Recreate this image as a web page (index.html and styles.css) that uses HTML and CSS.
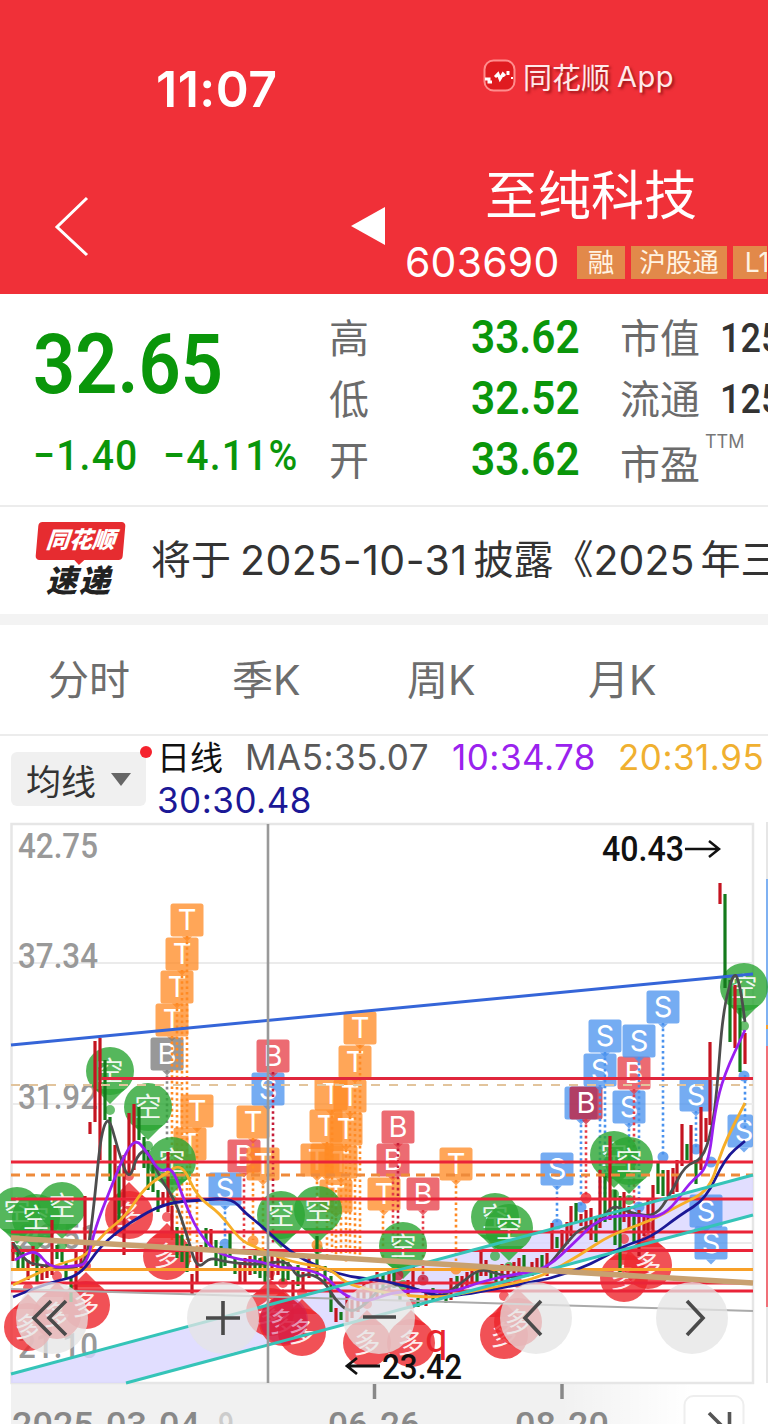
FILE: index.html
```html
<!DOCTYPE html>
<html lang="zh-CN">
<head>
    <meta charset="UTF-8">
    <title>至纯科技 603690</title>
    <link rel="stylesheet" href="styles.css">
</head>
<body>
    <header class="top-bar">
        <div class="status-row">
            <span class="clock">11:07</span>
            <span class="app-mark">
                <svg width="34" height="34" viewBox="0 0 34 34">
                    <rect x="1.5" y="1.5" width="30" height="30" rx="9" fill="#e01b20" stroke="#ff8d8d" stroke-width="2"/>
                    <path d="M2 20h4v3h3M12 18l3-3 2 5 3-5 2 2M25 12v4" fill="none" stroke="#fff" stroke-width="3"/>
                    <path d="M29 18v2" fill="none" stroke="#fff" stroke-width="2"/>
                </svg>
                <span class="app-cn">同花顺</span><span class="app-en">App</span>
            </span>
        </div>
        <div class="title-row">
            <svg class="back" width="36" height="62" viewBox="0 0 36 62"><path d="M33 2 3 31l30 28" fill="none" stroke="#fff" stroke-width="3"/></svg>
            <svg class="prev" width="35" height="40" viewBox="0 0 35 40"><path d="M0 20 34 1v38z" fill="#fff"/></svg>
            <div class="stock">
                <h1>至纯科技</h1>
                <div class="stock-code">
                    <span class="code">603690</span>
                    <span class="tag">融</span>
                    <span class="tag tag-wide">沪股通</span>
                    <span class="tag">L1</span>
                </div>
            </div>
        </div>
    </header>

    <section class="quote">
        <div class="quote-main">
            <div class="price">32.65</div>
            <div class="change"><span>−1.40</span><span>−4.11%</span></div>
        </div>
        <dl class="quote-grid">
            <dt>高</dt><dd>33.62</dd>
            <dt>低</dt><dd>32.52</dd>
            <dt>开</dt><dd>33.62</dd>
        </dl>
        <dl class="quote-more">
            <dt>市值</dt><dd>125</dd>
            <dt>流通</dt><dd>125</dd>
            <dt class="pe">市盈</dt><dd class="ttm">TTM</dd>
        </dl>
    </section>

    <section class="news">
        <div class="news-logo">
            <span class="news-brand">同花顺</span>
            <span class="news-name">速递</span>
        </div>
        <p>将于<span class="num date">2025-10-31</span>披露《<span class="num">2025</span><span class="year">年三</span></p>
    </section>

    <nav class="tabs">
        <span>分时</span><span>季K</span><span>周K</span><span>月K</span><span>日</span>
    </nav>

    <section class="legend">
        <div class="ma-select">均线<i class="caret"></i><i class="dot"></i></div>
        <div class="ma-values">
            <span class="ma-name">日线</span><span class="ma5">MA5:35.07</span><span class="ma10">10:34.78</span><span class="ma20">20:31.95</span>
            <span class="ma30">30:30.48</span>
        </div>
    </section>

    <section class="chart">
        <svg id="kline" width="768" height="604" viewBox="0 820 768 604"></svg>
        <div class="chart-nav">
            <button><svg viewBox="0 0 72 72"><path d="M35 19 18 36l17 17M50 19 33 36l17 17"/></svg></button>
            <button><svg viewBox="0 0 72 72"><path d="M36 19v34M19 36h34"/></svg></button>
            <button><svg viewBox="0 0 72 72"><path d="M20 35h33"/></svg></button>
            <button><svg viewBox="0 0 72 72"><path d="M41 19 25 36l16 17"/></svg></button>
            <button><svg viewBox="0 0 72 72"><path d="M31 19l16 17-16 17"/></svg></button>
        </div>
    </section>
    <script src="chart.js"></script>
</body>
</html>
```

FILE: styles.css
```css
* {
    box-sizing: border-box;
}
body {
    margin: 0;
    width: 768px;
    height: 1424px;
    overflow: hidden;
    background: #fff;
    font-family: Inter, "Noto Sans CJK SC", sans-serif;
    color: #333;
}
h1, p, dl, dd {
    margin: 0;
}

/* header */
.top-bar {
    height: 294px;
    background: #f03038;
    color: #fff;
    overflow: hidden;
}
.status-row {
    display: flex;
    height: 160px;
    padding: 57px 0 0 156px;
    align-items: flex-start;
}
.clock {
    width: 327px;
    margin-top: 7px;
    font-size: 50px;
    line-height: 50px;
    font-weight: 600;
    letter-spacing: 0.5px;
}
.app-mark {
    display: flex;
    align-items: center;
    height: 38px;
    text-shadow: 2px 2px 3px rgba(90, 0, 0, 0.6);
    color: #ffe9e9;
}
.app-cn {
    margin-left: 6px;
    font-size: 29px;
}
.app-en {
    margin-left: 7px;
    font-size: 29px;
    letter-spacing: 0.5px;
}
.title-row {
    display: flex;
    align-items: flex-start;
    padding-left: 54px;
    overflow: hidden;
}
.back, .prev, .stock {
    flex: none;
}
.back {
    margin-top: 36px;
}
.prev {
    margin: 46px 0 0 261px;
}
.stock {
    width: 362px;
    margin-left: 19px;
    white-space: nowrap;
}
.stock h1 {
    padding: 2px 0 0 80px;
    font-size: 53px;
    line-height: 68px;
    font-weight: 400;
}
.stock-code {
    display: flex;
    align-items: center;
    height: 64px;
    overflow: hidden;
}
.code {
    flex: none;
    width: 172px;
    font-size: 41px;
    letter-spacing: 0.2px;
}
.tag {
    flex: none;
    width: 48px;
    height: 33px;
    margin-right: 6px;
    background: #e2894a;
    color: #fff3e2;
    font-size: 26.5px;
    line-height: 32px;
    text-align: center;
}
.tag-wide {
    width: 96px;
}

/* quote */
.quote {
    display: flex;
    height: 213px;
    border-bottom: 2px solid #ececec;
    overflow: hidden;
}
.quote-main {
    flex: none;
    width: 329px;
    padding-left: 33px;
    color: #0a960a;
    font-family: Roboto, sans-serif;
}
.price {
    margin-top: 29px;
    font-size: 84px;
    line-height: 84px;
    font-weight: 600;
    transform: scaleX(0.88);
    transform-origin: left;
}
.change {
    display: flex;
    gap: 27px;
    margin-top: 24px;
    font-size: 43px;
    line-height: 48px;
    font-weight: 500;
    letter-spacing: 1.3px;
    white-space: nowrap;
    transform: scaleX(0.91);
    transform-origin: left;
}
.quote-grid, .quote-more {
    display: grid;
    flex: none;
    grid-auto-rows: 61px;
    align-content: start;
    padding-top: 13px;
    font-size: 40px;
    line-height: 63px;
    color: #6b6b6b;
}
.quote-grid {
    width: 291px;
    grid-template-columns: 142px 149px;
}
.quote-grid dd, .quote-more dd {
    font-family: Roboto, sans-serif;
    font-size: 47px;
    line-height: 60px;
    font-weight: 600;
    color: #0a960a;
    transform: scaleX(0.9);
    transform-origin: left;
}
.quote-more {
    width: 148px;
    grid-template-columns: 100px 48px;
    overflow: hidden;
}
.quote-more dd {
    font-size: 40px;
    line-height: 64px;
    font-weight: 500;
    color: #333;
}
.quote-more .pe {
    padding-top: 4px;
}
.quote-more .ttm {
    margin: -7px 0 0 -15px;
    font-family: Inter, sans-serif;
    font-size: 18px;
    line-height: 40px;
    font-weight: 400;
    color: #777;
    transform: none;
}

/* news */
.news {
    display: flex;
    height: 118px;
    padding: 15px 0 0 37px;
    border-bottom: 11px solid #f3f3f3;
    overflow: hidden;
}
.news-logo {
    flex: none;
    width: 114px;
    line-height: 1;
    font-style: italic;
    font-weight: 900;
}
.news-brand {
    display: block;
    width: 87px;
    height: 38px;
    border-radius: 4px;
    background: #e62c30;
    color: #fff;
    font-size: 23px;
    line-height: 37px;
    text-align: center;
    transform: skewX(-5deg);
}
.news-brand::after {
    content: "";
    display: block;
    width: 0;
    margin: 0 auto;
    border: 6px solid transparent;
    border-top-color: #e62c30;
}
.news-name {
    display: block;
    margin: 4px 0 0 9px;
    font-size: 31px;
    letter-spacing: 2px;
    line-height: 34px;
    color: #222;
}
.news p {
    display: flex;
    font-size: 40px;
    line-height: 76px;
    white-space: nowrap;
}
.num {
    font-size: 41px;
}
.date {
    margin: 0 6px 0 9px;
    letter-spacing: 0.5px;
}
.year {
    margin-left: 6px;
}

/* tabs */
.tabs {
    display: flex;
    height: 111px;
    padding-left: 48px;
    border-bottom: 2px solid #ececec;
    font-size: 41px;
    line-height: 111px;
    color: #6d6d6d;
    white-space: nowrap;
    overflow: hidden;
}
.tabs span {
    flex: none;
    width: 175px;
}
.tabs span:first-child {
    width: 184px;
}
.tabs span:nth-child(3) {
    width: 181px;
}

/* moving averages */
.legend {
    display: flex;
    height: 84px;
    padding-left: 11px;
    overflow: hidden;
}
.ma-select {
    position: relative;
    display: flex;
    flex: none;
    align-items: center;
    width: 135px;
    height: 54px;
    margin-top: 16px;
    padding-left: 15px;
    border-radius: 6px;
    background: #f0f0f0;
    font-size: 35px;
}
.caret {
    margin: 1px 0 0 15px;
    border: 10px solid transparent;
    border-top: 13px solid #666;
    border-bottom: 0;
}
.dot {
    position: absolute;
    top: -6px;
    right: -6px;
    width: 12px;
    height: 12px;
    border-radius: 50%;
    background: #f5222d;
}
.ma-values {
    margin-left: 11px;
    font-size: 35px;
    line-height: 42px;
    letter-spacing: 0.5px;
    white-space: nowrap;
}
.ma-name {
    margin-right: 22px;
    font-size: 33px;
    letter-spacing: 0;
    color: #111;
}
.ma5 {
    margin-right: 23px;
    color: #595959;
}
.ma10 {
    margin-right: 22px;
    color: #9a22ee;
}
.ma20 {
    color: #f0b030;
}
.ma30 {
    display: block;
    color: #1b1896;
}

/* chart */
.chart {
    position: relative;
    height: 604px;
}
#kline {
    display: block;
}
.chart-nav {
    position: absolute;
    top: 462px;
    left: 16px;
    display: flex;
    gap: 84.5px;
}
.chart-nav button {
    width: 72px;
    height: 72px;
    padding: 0;
    border: 0;
    border-radius: 50%;
    background: rgba(228, 228, 228, 0.75);
}
.chart-nav button:first-child {
    margin-right: 14px;
}
.chart-nav path {
    fill: none;
    stroke: #4a4a4a;
    stroke-width: 3.6;
}
```

FILE: chart.js
```js
const NS = 'http://www.w3.org/2000/svg';
const svg = document.getElementById('kline');

function add(name, attrs, text) {
    const node = document.createElementNS(NS, name);
    for (const key in attrs) node.setAttribute(key, attrs[key]);
    if (text) node.textContent = text;
    svg.appendChild(node);
    return node;
}
function line(x1, y1, x2, y2, color, width, dash) {
    add('line', { x1, y1, x2, y2, stroke: color, 'stroke-width': width, 'stroke-dasharray': dash || 'none' });
}
function label(x, y, text, width, color, weight) {
    add('text', {
        x, y, fill: color, 'font-size': 35, 'font-weight': weight || 500, 'font-family': 'Roboto, sans-serif',
        textLength: width, lengthAdjust: 'spacingAndGlyphs'
    }, text);
}

const RED = '#c41420', GREEN = '#147a1c';
const TAG = { T: '#ff8a24', B: '#e63c46', S: '#4a92ee', G: '#777', P: '#c41c38' };

// frame and grid
add('rect', { x: 11, y: 1384, width: 757, height: 40, fill: '#f1f1f1' });
const grad = add('linearGradient', { id: 'fade' });
grad.innerHTML = '<stop offset="0" stop-color="#fff" stop-opacity="0"/><stop offset="1" stop-color="#fff"/>';
add('rect', { x: 560, y: 1384, width: 130, height: 40, fill: 'url(#fade)' });
add('rect', { x: 690, y: 1384, width: 78, height: 40, fill: '#fff' });
add('rect', { x: 11.5, y: 824, width: 741.5, height: 559, fill: '#fff', stroke: '#e6e6e6', 'stroke-width': 2.5 });
for (const y of [963, 1104, 1243]) line(12, y, 753, y, '#ebebeb', 2);
line(766, 823, 768, 823, '#e6e6e6', 2);
line(767, 823, 767, 1383, '#e6e6e6', 2);
line(767, 879, 767, 1046, '#7fb1f2', 2);
line(767, 1046, 767, 1307, '#f07078', 2);
line(766, 1027, 768, 1027, '#f5a030', 4);

label(18, 858, '42.75', 80, '#999');
label(18, 968, '37.34', 80, '#999');
label(18, 1109, '31.92', 80, '#999');
label(18, 1249, '26.51', 80, '#999');
label(18, 1358, '21.10', 80, '#999');

add('polygon', { points: '11,1374 753,1175 753,1215 126,1383 11,1383', fill: '#d9d6ff', opacity: 0.8 });

// signal tags
const tags = [
    ['T', 187, 920], ['T', 182, 954], ['T', 177, 987], ['T', 172, 1020], ['B', 167, 1054, 'G'], ['T', 197, 1111], ['T', 190, 1144],
    ['T', 253, 1122], ['B', 244, 1156], ['T', 263, 1164], ['S', 225, 1189], ['S', 268, 1089], ['B', 273, 1056],
    ['T', 360, 1028], ['T', 355, 1062], ['T', 331, 1094], ['T', 350, 1096], ['T', 326, 1126], ['T', 346, 1129], ['T', 317, 1160], ['T', 341, 1162], ['', 327, 1160, 'T'], ['T', 336, 1196],
    ['B', 398, 1127], ['B', 393, 1160], ['T', 384, 1194], ['B', 423, 1194], ['T', 456, 1164],
    ['S', 557, 1169], ['', 581, 1103, 'S'], ['B', 586, 1103, 'P'], ['S', 600, 1070], ['S', 605, 1036], ['S', 629, 1107], ['B', 634, 1073], ['S', 639, 1041],
    ['S', 663, 1007], ['S', 696, 1095], ['S', 706, 1211], ['S', 711, 1243], ['S', 744, 1131]
];
for (const [letter, x, y, tone] of tags) {
    const color = TAG[tone || letter];
    const w = Math.min(33, 753 - x + 16.5);
    add('path', { d: `M${x - 5} ${y + 16.5}h10l-5 5z`, fill: color, opacity: 0.75 });
    add('rect', { x: x - 16.5, y: y - 16.5, width: w, height: 33, rx: 2.5, fill: color, opacity: 0.76 });
    if (letter) add('text', { x, y: y + 10, fill: '#fff', 'font-size': 29, 'text-anchor': 'middle', 'font-family': 'Inter, sans-serif' }, letter);
}

// dotted stems from signals to their bars
const stems = [
    [167, 1070, 1140, '#888'], [172, 1036, 1240, TAG.T], [177, 1003, 1240, TAG.T], [182, 970, 1240, TAG.T], [187, 936, 1240, TAG.T],
    [190, 1160, 1262, TAG.T], [197, 1128, 1262, TAG.T], [253, 1138, 1240, TAG.T], [263, 1180, 1262, TAG.T],
    [317, 1176, 1250, TAG.T], [327, 1142, 1255, TAG.T], [332, 1110, 1255, TAG.T], [336, 1190, 1262, TAG.T], [341, 1178, 1262, TAG.T],
    [346, 1144, 1262, TAG.T], [350, 1111, 1262, TAG.T], [355, 1078, 1262, TAG.T], [360, 1045, 1262, TAG.T],
    [383, 1210, 1262, TAG.T], [456, 1180, 1265, TAG.T],
    [225, 1206, 1240, TAG.S], [244, 1173, 1250, TAG.B], [273, 1072, 1245, TAG.P], [393, 1176, 1262, TAG.B], [398, 1143, 1270, TAG.P], [423, 1210, 1280, TAG.B],
    [557, 1186, 1224, TAG.S], [581, 1119, 1207, TAG.S], [586, 1119, 1198, TAG.B], [600, 1085, 1200, TAG.S], [605, 1052, 1200, TAG.S],
    [629, 1123, 1200, TAG.S], [634, 1089, 1235, TAG.B], [639, 1057, 1207, TAG.S], [663, 1023, 1155, TAG.S], [696, 1111, 1150, TAG.S], [745, 1075, 1130, TAG.S]
];
for (const [x, y1, y2, color] of stems) line(x, y1, x, y2, color, 2.6, '2.6 3');

// round long / short markers
const shorts = [[110, 1071], [148, 1107], [172, 1161], [17, 1211], [36, 1218], [62, 1206], [281, 1215], [318, 1210], [403, 1246], [495, 1217], [509, 1228], [614, 1155], [629, 1161], [744, 987]];
const longs = [[129, 1215], [167, 1256], [28, 1327], [57, 1315], [86, 1305], [270, 1312], [283, 1322], [302, 1332], [367, 1343], [411, 1343], [504, 1335], [518, 1322], [624, 1278], [648, 1265]];
function marker([x, y], text, color, dir) {
    add('path', { d: `M${x - 15} ${y + dir * 18}L${x} ${y + dir * 33}L${x + 15} ${y + dir * 18}z`, fill: color, opacity: 0.8 });
    add('circle', { cx: x, cy: y, r: 24, fill: color, opacity: 0.8 });
    add('circle', { cx: x, cy: y + dir * 39, r: 5, fill: color, opacity: 0.7 });
    add('text', { x, y: y + 10, fill: '#fff', 'font-size': 27, 'text-anchor': 'middle', 'font-family': '"Noto Sans CJK SC", sans-serif', opacity: 0.9 }, text);
}
shorts.forEach(p => marker(p, '空', '#2ba533', 1));
longs.forEach(p => marker(p, '多', '#ee252c', -1));
add('circle', { cx: 284, cy: 1320, r: 24, fill: '#c01460', opacity: 0.4 });
for (const [x, y, color] of [[225, 1244, TAG.S], [253, 1241, TAG.T], [263, 1262, TAG.T], [317, 1245, TAG.T], [456, 1269, TAG.T], [423, 1280, TAG.P], [398, 1275, TAG.P],
    [557, 1224, TAG.S], [581, 1207, TAG.S], [586, 1198, '#ee252c'], [639, 1207, TAG.S], [663, 1157, TAG.S], [696, 1149, TAG.S], [711, 1162, TAG.S], [744, 1076, TAG.S]]) {
    add('circle', { cx: x, cy: y, r: 5.5, fill: color, opacity: 0.8 });
}

// bars: x, high, low, up (1) or down (0)
const bars = [
    [13, 1242, 1261, 1], [18, 1250, 1271, 0], [23, 1252, 1268, 0], [28, 1260, 1280, 1], [33, 1246, 1266, 1], [37, 1255, 1282, 0], [42, 1266, 1280, 1], [47, 1262, 1278, 1],
    [52, 1220, 1275, 1], [57, 1245, 1259, 0], [62, 1250, 1262, 0], [66, 1262, 1278, 0], [71, 1278, 1302, 0], [76, 1252, 1290, 1], [81, 1256, 1272, 1], [85, 1196, 1262, 1],
    [90, 1122, 1134, 1], [95, 1041, 1122, 1], [100, 1038, 1160, 1], [105, 1060, 1120, 0], [110, 1117, 1181, 0], [115, 1145, 1236, 1], [119, 1166, 1220, 0], [124, 1155, 1255, 1],
    [129, 1113, 1175, 1], [134, 1104, 1170, 1], [139, 1107, 1140, 0], [144, 1137, 1168, 0], [148, 1150, 1190, 0], [153, 1165, 1192, 0], [158, 1190, 1212, 0], [163, 1192, 1206, 1],
    [168, 1152, 1212, 1], [172, 1206, 1232, 1], [177, 1227, 1258, 0], [182, 1235, 1262, 0], [187, 1244, 1272, 0], [192, 1274, 1295, 1], [197, 1252, 1282, 1], [201, 1245, 1262, 1],
    [206, 1228, 1250, 0], [211, 1229, 1248, 1], [216, 1240, 1266, 0], [221, 1246, 1268, 0], [225, 1250, 1266, 0], [230, 1232, 1258, 0], [235, 1258, 1274, 0], [240, 1262, 1282, 1],
    [245, 1258, 1282, 1], [250, 1256, 1275, 1], [255, 1254, 1274, 0], [260, 1258, 1278, 0], [265, 1252, 1284, 0], [272, 1256, 1280, 1], [278, 1255, 1275, 1], [283, 1258, 1282, 0],
    [288, 1262, 1280, 0], [293, 1280, 1298, 1], [298, 1265, 1286, 0], [303, 1272, 1290, 1], [309, 1258, 1278, 1], [317, 1236, 1276, 0], [325, 1266, 1284, 0], [331, 1276, 1312, 0],
    [336, 1308, 1322, 1], [341, 1312, 1320, 0], [347, 1296, 1322, 1], [352, 1300, 1318, 1], [358, 1290, 1312, 1], [364, 1284, 1306, 1], [371, 1277, 1300, 1], [377, 1272, 1300, 1],
    [383, 1275, 1296, 0], [389, 1270, 1294, 1], [394, 1272, 1288, 0], [400, 1294, 1301, 0], [408, 1280, 1296, 1], [413, 1265, 1290, 1], [418, 1298, 1307, 0], [426, 1290, 1306, 1],
    [433, 1288, 1302, 0], [440, 1290, 1300, 1], [446, 1292, 1303, 0], [451, 1278, 1300, 1], [457, 1276, 1292, 0], [462, 1276, 1290, 1], [467, 1272, 1288, 1], [472, 1266, 1284, 1],
    [477, 1264, 1282, 0], [481, 1250, 1276, 1], [486, 1260, 1276, 1], [491, 1266, 1280, 0], [496, 1268, 1284, 0], [502, 1264, 1284, 1], [508, 1264, 1282, 1], [514, 1262, 1278, 1],
    [519, 1258, 1275, 1], [524, 1255, 1272, 0], [532, 1262, 1276, 1], [537, 1258, 1274, 1], [542, 1255, 1268, 0], [547, 1253, 1276, 1], [552, 1223, 1252, 1], [557, 1237, 1248, 0],
    [562, 1230, 1252, 1], [567, 1222, 1244, 1], [571, 1206, 1236, 1], [576, 1203, 1222, 0], [581, 1214, 1226, 1], [586, 1210, 1230, 1], [591, 1208, 1240, 1], [596, 1216, 1242, 0],
    [600, 1170, 1228, 1], [605, 1176, 1222, 0], [610, 1136, 1220, 1], [615, 1190, 1245, 0], [620, 1196, 1272, 0], [624, 1192, 1222, 1], [629, 1206, 1228, 1], [634, 1212, 1242, 0],
    [639, 1210, 1256, 1], [644, 1214, 1236, 1], [648, 1198, 1232, 1], [653, 1185, 1238, 1], [658, 1162, 1194, 0], [663, 1170, 1196, 0], [668, 1170, 1196, 1], [673, 1168, 1194, 1],
    [677, 1160, 1192, 1], [682, 1124, 1166, 1], [687, 1144, 1160, 0], [691, 1125, 1162, 1], [696, 1160, 1184, 0], [701, 1107, 1170, 1], [706, 1118, 1142, 1], [710, 1042, 1125, 1],
    [720, 883, 904, 1], [725, 894, 988, 0], [730, 980, 1042, 0], [735, 985, 1048, 1], [740, 1008, 1072, 0], [745, 1033, 1064, 1]
];
for (const [x, high, low, up] of bars) line(x, high, x, low, up ? RED : GREEN, 3.2);

// support / resistance lines
line(102, 1078.5, 753, 1078.5, '#e0263c', 3);
line(11, 1085, 753, 1085, '#e2c49c', 1.8, '9 9');
line(11, 1175, 753, 1175, '#ee8a3a', 2.8, '9 6');
for (const y of [1162, 1199, 1232, 1250.5, 1283, 1291]) line(11, y, 753, y, '#ea2438', 2.8);
line(11, 1269.5, 753, 1269.5, '#f8a028', 3);
line(11, 1289, 753, 1311, '#aaa', 2);
line(11, 1045, 753, 974, '#3565d8', 3);

function smooth(points, color) {
    let d = `M${points[0]}`;
    for (let i = 1; i < points.length - 1; i++) {
        const mx = (points[i][0] + points[i + 1][0]) / 2;
        const my = (points[i][1] + points[i + 1][1]) / 2;
        d += `Q${points[i]} ${mx},${my}`;
    }
    d += `L${points[points.length - 1]}`;
    add('path', { d, fill: 'none', stroke: color, 'stroke-width': 2.8 });
}
smooth([[13, 1243], [25, 1262], [40, 1265], [60, 1268], [85, 1266], [90, 1238], [95, 1195], [100, 1143], [105, 1122], [110, 1120], [118, 1150], [129, 1182], [137, 1155], [147, 1149], [160, 1178], [175, 1200], [187, 1235], [197, 1270], [210, 1257], [225, 1262], [260, 1265], [288, 1260], [297, 1278], [310, 1273], [325, 1282], [335, 1300], [350, 1313], [365, 1305], [380, 1288], [400, 1284], [420, 1290], [440, 1298], [460, 1284], [480, 1268], [500, 1275], [520, 1278], [545, 1270], [565, 1245], [580, 1228], [600, 1224], [612, 1204], [630, 1213], [655, 1217], [670, 1195], [685, 1165], [702, 1160], [712, 1130], [717, 1090], [723, 1010], [734, 970], [740, 985], [745, 1022]], '#4d4d4d');
smooth([[13, 1297], [50, 1282], [80, 1276], [100, 1246], [130, 1222], [165, 1203], [200, 1200], [232, 1198], [245, 1213], [262, 1226], [290, 1252], [320, 1268], [350, 1277], [380, 1280], [410, 1287], [440, 1297], [470, 1294], [510, 1286], [550, 1279], [590, 1265], [625, 1245], [650, 1238], [680, 1215], [706, 1199], [725, 1158], [745, 1141]], '#1b1896');
smooth([[13, 1285], [40, 1272], [65, 1262], [85, 1257], [105, 1232], [125, 1217], [145, 1187], [165, 1174], [182, 1163], [197, 1197], [220, 1213], [240, 1240], [255, 1247], [290, 1262], [330, 1268], [345, 1283], [370, 1290], [400, 1295], [440, 1298], [480, 1290], [520, 1282], [545, 1275], [580, 1255], [610, 1235], [650, 1221], [680, 1205], [710, 1190], [722, 1148], [745, 1103]], '#f7ae28');
smooth([[15, 1260], [25, 1254], [37, 1251], [50, 1268], [75, 1266], [87, 1264], [95, 1228], [110, 1190], [122, 1160], [135, 1138], [147, 1152], [160, 1173], [172, 1166], [185, 1203], [197, 1230], [215, 1252], [240, 1260], [260, 1261], [280, 1268], [300, 1268], [325, 1275], [340, 1292], [355, 1300], [370, 1301], [390, 1293], [420, 1290], [450, 1293], [480, 1282], [510, 1275], [545, 1270], [575, 1242], [595, 1222], [612, 1216], [640, 1215], [655, 1218], [672, 1208], [690, 1182], [708, 1168], [715, 1110], [724, 1075], [745, 1030]], '#9a1ff0');

line(11, 1374, 753, 1175, '#35c4b8', 3);
line(126, 1383, 753, 1215, '#35c4b8', 3);
line(11, 1238, 753, 1283, '#c8a170', 5.5);

// crosshair and price callouts
line(268, 824, 268, 1383, '#999', 2.6);
add('text', { x: 425, y: 1352, fill: '#e8242c', 'font-size': 40, 'font-family': 'Roboto, sans-serif' }, 'q');
label(602, 861, '40.43', 82, '#111');
add('path', { d: 'M685 849h33M709 841l10 8-10 8', fill: 'none', stroke: '#111', 'stroke-width': 2.5 });
label(382, 1379, '23.42', 80, '#111');
add('path', { d: 'M380 1366h-32M357 1358l-10 8 10 8', fill: 'none', stroke: '#111', 'stroke-width': 2.8 });

// date axis
line(374.5, 1384, 374.5, 1399, '#888', 3.5);
line(562, 1384, 562, 1399, '#888', 3.5);
label(12, 1437, '2025-03-04', 188, '#888');
label(218, 1437, '9', 16, '#ccc');
label(328, 1437, '06-26', 92, '#888');
label(515, 1437, '08-20', 94, '#888');
add('rect', { x: 684.5, y: 1396, width: 59, height: 50, rx: 9, fill: '#fff', stroke: '#eee', 'stroke-width': 2 });
add('path', { d: 'M709 1413l14 14M729.500 1412v14', fill: 'none', stroke: '#555', 'stroke-width': 3.6 });
```
